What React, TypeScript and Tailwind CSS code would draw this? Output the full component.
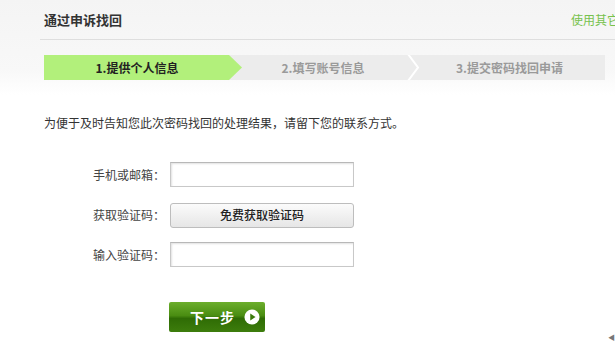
const font = { fontFamily: '"Noto Sans CJK SC", "Noto Sans", sans-serif' };

function Steps() {
    return (
        <div className="flex h-[25px] w-[561px] items-stretch bg-[#ececec] text-[12px] font-bold">
            <div className="flex w-[184px] items-center justify-center bg-[#b2f07b] pl-[2px] text-[#222]">
                1.提供个人信息
            </div>
            <svg width="14" height="25" viewBox="0 0 14 25" className="shrink-0">
                <polygon points="0,0 1,0 14,12.5 1,25 0,25" fill="#b2f07b" />
            </svg>
            <div className="flex w-[164px] items-center justify-center pr-[2px] text-[#9a9a9a]">
                2.填写账号信息
            </div>
            <svg width="14" height="25" viewBox="0 0 14 25" className="shrink-0">
                <polyline points="2,-1 12,12.5 2,26" fill="none" stroke="#ffffff" strokeWidth="2" />
            </svg>
            <div className="flex flex-1 items-center justify-center pr-[6px] text-[#9a9a9a]">
                3.提交密码找回申请
            </div>
        </div>
    );
}

function FieldRow({ label, children }: { label: string; children: React.ReactNode }) {
    return (
        <div className="flex h-[25px] items-center">
            <div className="w-[126px] text-right text-[12px] text-[#444]">{label}：</div>
            <div className="ml-[5px]">{children}</div>
        </div>
    );
}

function TextBox() {
    return (
        <div className="h-[25px] w-[184px] border border-[#c8c8c8] border-t-[#b8b8b8] bg-white shadow-[inset_1px_1px_2px_rgba(0,0,0,0.12)]" />
    );
}

export default function App() {
    return (
        <div
            style={font}
            className="relative h-[356px] w-[615px] overflow-hidden bg-[linear-gradient(to_bottom,#f4f4f4_0px,#f8f8f8_70px,#ffffff_95px)]"
        >
            <div className="ml-[40px] flex h-[40px] items-center justify-between border-b border-[#dedede] pl-[4px]">
                <span className="text-[13px] font-bold text-[#333]">通过申诉找回</span>
                <span className="-mr-[28px] whitespace-nowrap text-[12px] text-[#77c24e]">使用其它方式</span>
            </div>
            <div className="pl-[44px] pt-[15px]">
                <Steps />
                <p className="mt-[34px] text-[12px] text-[#333]">
                    为便于及时告知您此次密码找回的处理结果，请留下您的联系方式。
                </p>
            </div>
            <div className="mt-[30px] flex flex-col gap-[15px] pl-[39px]">
                <FieldRow label="手机或邮箱">
                    <TextBox />
                </FieldRow>
                <FieldRow label="获取验证码">
                    <button className="h-[25px] w-[184px] rounded-[3px] border border-[#bdbdbd] bg-[linear-gradient(to_bottom,#fbfbfb,#e6e6e6)] text-[12px] font-medium text-[#222]">
                        免费获取验证码
                    </button>
                </FieldRow>
                <FieldRow label="输入验证码">
                    <TextBox />
                </FieldRow>
            </div>
            <div className="mt-[35px] pl-[169px]">
                <button className="flex h-[30px] w-[96px] items-center justify-end gap-[9px] rounded-[2px] bg-[linear-gradient(to_bottom,#6cae2c_0%,#4a8d12_45%,#2f6c05_55%,#3d7d0c_100%)] pr-[5px] text-[14px] font-bold text-white">
                    <span className="tracking-[1px]">下一步</span>
                    <svg width="16" height="16" viewBox="0 0 18 18">
                        <circle cx="9" cy="9" r="8.5" fill="#ffffff" />
                        <polygon points="7,5 13,9 7,13" fill="#3a7a0a" />
                    </svg>
                </button>
            </div>
            <span className="absolute bottom-[15px] right-0 text-[7px] leading-none text-[#777]">◀</span>
        </div>
    );
}
